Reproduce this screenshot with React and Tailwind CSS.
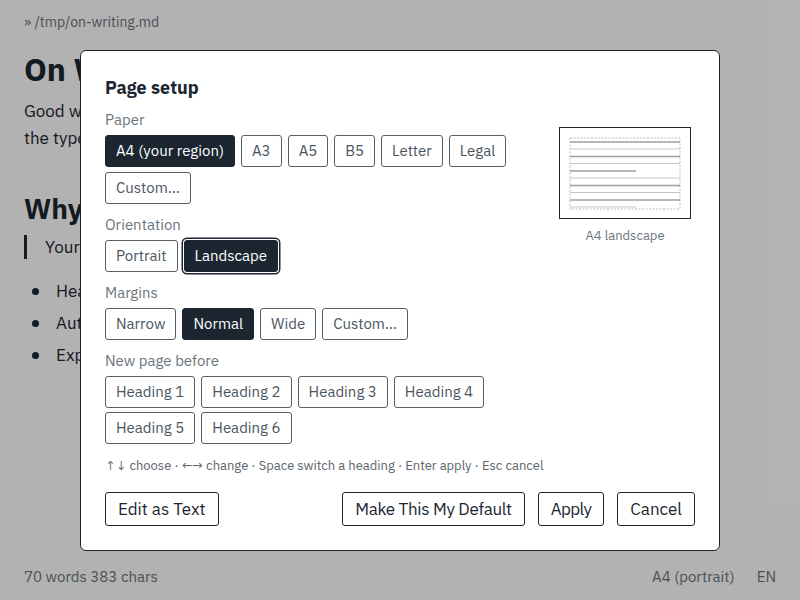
import React from 'react';

const font = { fontFamily: '"IBM Plex Sans", Roboto, "Noto Sans", sans-serif' };

const Choice = ({ label, active, focused }) => (
  <span
    className={`rounded-[3px] border px-[10px] py-[5px] text-[15px] leading-[20px] ${
      active ? 'border-[#1b2631] bg-[#1b2631] text-white' : 'border-[#56606a] bg-white text-[#4a5560]'
    } ${focused ? 'shadow-[0_0_0_1px_white,0_0_0_2.5px_#1b2631]' : ''}`}
  >
    {label}
  </span>
);

const Group = ({ title, items, active, focused, rowGap = 'gap-y-[5px]', className = '' }) => (
  <div className={className}>
    <div className="text-[15px] leading-[20px] text-[#6b747c]">{title}</div>
    <div className={`mt-[5px] flex flex-wrap gap-x-[6px] ${rowGap}`}>
      {items.map((it) => (
        <Choice key={it} label={it} active={it === active} focused={focused && it === active} />
      ))}
    </div>
  </div>
);

const PagePreview = () => {
  const rows = [15, 22, 29.5, 36.5, 44, 51, 58.5, 65.5, 73, 80];
  return (
    <svg width="132" height="92" viewBox="0 0 132 92">
      <rect x="0.5" y="0.5" width="131" height="91" fill="white" stroke="#1b2631" />
      <rect x="11" y="11" width="110" height="71" fill="none" stroke="#b5b9bd" strokeDasharray="2 1.5" />
      {rows.map((y, i) => (
        <line
          key={y}
          x1="11"
          x2={i === 4 || i === 9 ? 77 : 121}
          y1={y}
          y2={y}
          stroke={i % 2 === 0 ? '#9aa0a6' : '#c3c7cb'}
          strokeWidth={i % 2 === 0 ? 1.5 : 1}
        />
      ))}
    </svg>
  );
};

const FooterButton = ({ children, className = '' }) => (
  <span
    className={`rounded-[3px] border border-[#1b2631] bg-white px-[12px] py-[5px] text-[17px] leading-[22px] text-[#1b2631] ${className}`}
  >
    {children}
  </span>
);

export default function App() {
  return (
    <div className="relative h-[600px] w-[800px] overflow-hidden bg-white text-[#1b2631]" style={font}>
      {/* document behind the dialog */}
      <div className="px-6 pt-[12px]">
        <div className="text-[14px] leading-[20px] text-[#6b747c]">» /tmp/on-writing.md</div>
        <h1 className="mt-[17px] text-[32px] font-bold leading-[40px]">On Writing</h1>
        <p className="mt-[9px] text-[17px] leading-[27px]">
          Good writing starts with structure.
          <br />
          the typography follows.
        </p>
        <h2 className="mt-[39px] text-[28px] font-bold leading-[36px]">Why it matters</h2>
        <div className="mt-[8px] border-l-[3px] border-[#1b2631] pl-[18px] text-[17px] leading-[24px]">
          Your readers deserve clarity.
        </div>
        <ul className="mt-[20px] space-y-[8px] pl-[8px] text-[17px] leading-[24px]">
          {['Headings guide the eye', 'Automatic page breaks', 'Export anywhere'].map((t) => (
            <li key={t} className="flex items-center gap-[17px]">
              <span className="h-[7px] w-[7px] rounded-full bg-[#1b2631]" />
              {t}
            </li>
          ))}
        </ul>
      </div>
      <div className="absolute bottom-0 left-0 right-0 flex h-[46px] items-center justify-between px-6 text-[15px] text-[#6b747c]">
        <span>70 words 383 chars</span>
        <span className="flex gap-[22px]">
          <span>A4 (portrait)</span>
          <span>EN</span>
        </span>
      </div>

      {/* dim overlay */}
      <div className="absolute inset-0 bg-black/30" />

      {/* dialog */}
      <div className="absolute left-[80px] top-[50px] flex h-[501px] w-[640px] flex-col rounded-[6px] border border-[#1b2631] bg-white px-[24px] pb-[24px] pt-[25px]">
        <div className="text-[18px] font-bold leading-[24px]">Page setup</div>
        <div className="mt-[10px] flex">
          <div className="flex-1">
            <Group
              title="Paper"
              items={['A4 (your region)', 'A3', 'A5', 'B5', 'Letter', 'Legal', 'Custom…']}
              active="A4 (your region)"
              className="w-[410px]"
            />
            <Group title="Orientation" items={['Portrait', 'Landscape']} active="Landscape" focused className="mt-[11px]" />
            <Group title="Margins" items={['Narrow', 'Normal', 'Wide', 'Custom…']} active="Normal" className="mt-[11px]" />
            <Group
              title="New page before"
              items={['Heading 1', 'Heading 2', 'Heading 3', 'Heading 4', 'Heading 5', 'Heading 6']}
              rowGap="gap-y-[4px]"
              className="mt-[11px] w-[390px]"
            />
          </div>
          <div className="mr-[4px] mt-[17px] flex w-[132px] flex-col items-center">
            <PagePreview />
            <div className="mt-[8px] text-[13px] leading-[18px] text-[#6b747c]">A4 landscape</div>
          </div>
        </div>
        <div className="mt-[13px] text-[13px] leading-[18px] text-[#5b646c]">
          ↑↓ choose · ←→ change · Space switch a heading · Enter apply · Esc cancel
        </div>
        <div className="mt-auto flex items-center">
          <FooterButton>Edit as Text</FooterButton>
          <div className="ml-auto flex gap-[13px]">
            <FooterButton className="tracking-[-0.3px]">Make This My Default</FooterButton>
            <FooterButton className="tracking-[-0.6px]">Apply</FooterButton>
            <FooterButton>Cancel</FooterButton>
          </div>
        </div>
      </div>
    </div>
  );
}
